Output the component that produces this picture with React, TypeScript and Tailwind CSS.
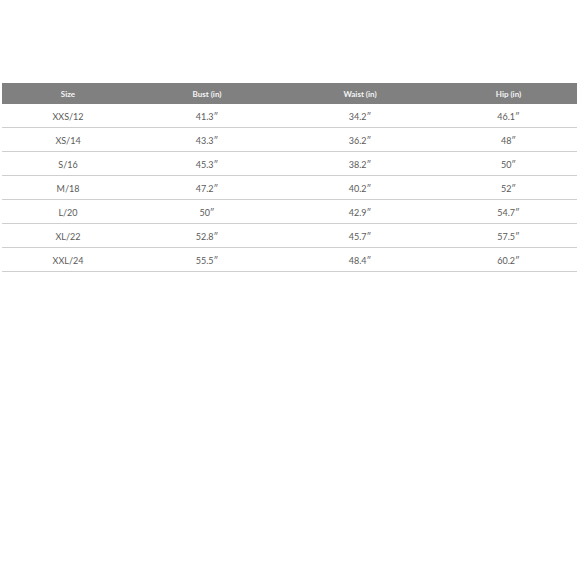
import React from "react";

const rows = [
  ["XXS/12", "41.3″", "34.2″", "46.1″"],
  ["XS/14", "43.3″", "36.2″", "48″"],
  ["S/16", "45.3″", "38.2″", "50″"],
  ["M/18", "47.2″", "40.2″", "52″"],
  ["L/20", "50″", "42.9″", "54.7″"],
  ["XL/22", "52.8″", "45.7″", "57.5″"],
  ["XXL/24", "55.5″", "48.4″", "60.2″"],
];

const widths = ["w-[132px]", "w-[146px]", "w-[160px]", "w-[137px]"];

export default function App() {
  return (
    <div
      className="w-[580px] h-[580px] bg-white pt-[83px] pl-[2px]"
      style={{ fontFamily: "Lato, 'Open Sans', sans-serif" }}
    >
      <div className="w-[575px] flex flex-col">
        <div className="flex h-[21px] bg-[#808080] items-center">
          {["Size", "Bust (in)", "Waist (in)", "Hip (in)"].map((h, i) => (
            <div key={h} className={`${widths[i]} text-center text-[8px] font-bold text-[#f4f4f4]`}>
              {h}
            </div>
          ))}
        </div>
        {rows.map((r) => (
          <div key={r[0]} className="flex h-[24px] items-center border-b border-[#cfcfcf] pt-[3px]">
            {r.map((c, i) => (
              <div key={i} className={`${widths[i]} text-center text-[9px] text-[#5a5a5a]`}>
                {c}
              </div>
            ))}
          </div>
        ))}
      </div>
    </div>
  );
}
